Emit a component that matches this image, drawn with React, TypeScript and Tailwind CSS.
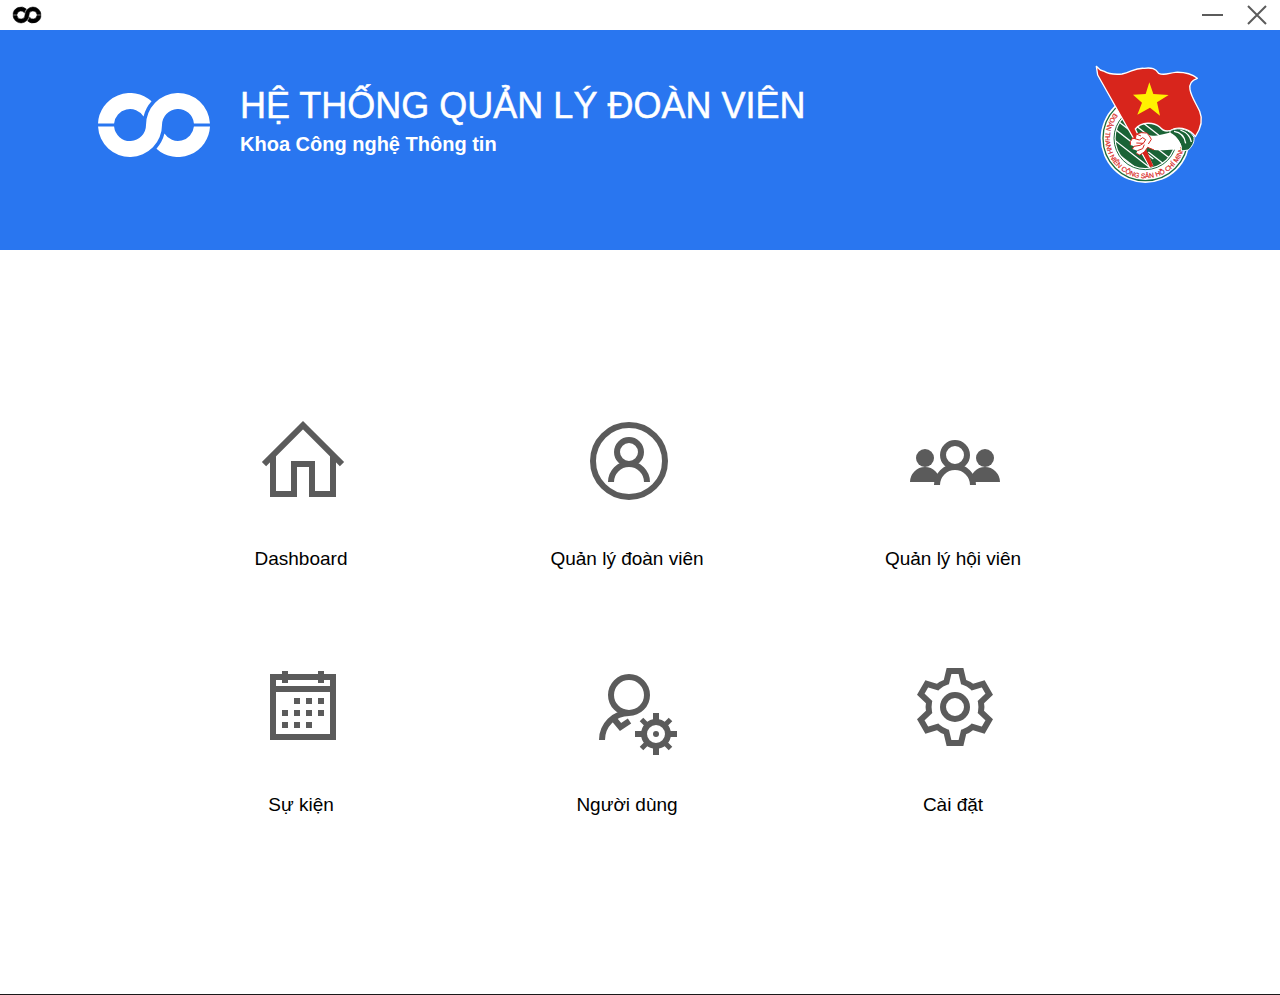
import type { ReactNode } from "react";

function BrandMark({ className }: { className: string }) {
  return (
    <svg viewBox="0 0 112 64" className={className} fill="currentColor" aria-hidden="true">
      <path d="M0 30.4A32 32 0 0 1 53.54 8.34A35.5 35.5 0 0 0 45.54 23.47A16 16 0 0 0 16.1 30.4Z" />
      <path d="M112 33.6A32 32 0 0 1 58.46 55.66A35.5 35.5 0 0 0 66.46 40.53A16 16 0 0 0 95.9 33.6Z" />
      <path d="M0.04 33.6A32 32 0 0 0 64 32A16 16 0 0 1 95.92 30.4H111.96A32 32 0 0 0 48 32A16 16 0 0 1 16.08 33.6Z" />
    </svg>
  );
}

function UnionEmblem() {
  return (
    <svg viewBox="0 0 420 435" className="h-[145px] w-[140px] shrink-0" role="img" aria-label="Huy hiệu Đoàn">
      <defs>
        <path id="motto" d="M103 189A120 120 0 1 0 316 265" />
        <clipPath id="field">
          <circle cx="196" cy="265" r="91" />
        </clipPath>
      </defs>
      <circle cx="196" cy="265" r="134" fill="#fff" />
      <circle cx="196" cy="265" r="127" fill="none" stroke="#1b6b3c" strokeWidth="4" />
      <circle cx="196" cy="265" r="94" fill="#fff" stroke="#1b6b3c" strokeWidth="3" />
      <circle cx="196" cy="265" r="89" fill="#1a6336" />
      <g clipPath="url(#field)" stroke="#fff" strokeWidth="4" fill="none">
        <path d="M94 198L215 292M94 229L220 327M94 263L210 353M98 300L186 368M120 190L230 276M205 306L260 349M214 282L280 333M178 210L250 266" />
      </g>
      <text
        fill="#d8251c"
        stroke="#d8251c"
        strokeWidth="0.6"
        fontFamily="Liberation Sans, Arial, sans-serif"
        fontSize="20"
      >
        <textPath href="#motto">ĐOÀN THANH NIÊN CỘNG SẢN HỒ CHÍ MINH</textPath>
      </text>
      <path
        d="M49 49L61 60L73 64Q90 75 126 72C154 67 164 53 192 55C216 52 226 56 236 70C253 78 267 69 286 67C310 66 337 73 352 85C337 90 326 98 330 119C334 141 349 162 359 184C369 208 365 232 346 260C332 239 304 230 281 237C263 247 248 242 239 231C222 216 184 214 166 237L218 347L209 351L53 75Z"
        fill="#d8251c"
        stroke="#fff"
        strokeWidth="4"
        strokeLinejoin="round"
      />
      <path
        d="M270 242C299 229 331 239 342 262C344 279 334 291 325 300L304 303C308 282 290 264 270 250Z"
        fill="#1a6336"
        stroke="#fff"
        strokeWidth="3"
      />
      <path d="M282 244Q312 248 317 280M301 240Q330 251 334 276" fill="none" stroke="#fff" strokeWidth="4" />
      <path d="M187 305L199 299L220 348L210 352Z" fill="#d8251c" />
      <path
        d="M151 275L158 264L166 266L169 252L184 248L200 249L207 256C226 260 254 251 270 248C285 253 299 270 303 286L298 300C273 298 243 303 222 300L203 292L193 306L179 315L169 310L172 302L157 297L162 289L151 285Z"
        fill="#fff"
      />
      <path
        d="M158 264L178 270L188 263L197 269L190 280L169 279M162 289L180 286L190 280M172 302L188 296L193 284M169 252L183 258M207 256L214 268L205 282"
        fill="none"
        stroke="#d8251c"
        strokeWidth="3"
      />
      <path
        d="M151 285V275L158 264L166 266L169 252L184 248L200 249L207 256M157 297L162 289M169 310L179 315L193 306L203 292L222 300"
        fill="none"
        stroke="#d8251c"
        strokeWidth="3"
        strokeLinejoin="round"
      />
      <path d="M208 97L220 132L266 135L231 157L240 197L210 173L172 194L186 158L159 134L197 132Z" fill="#fff200" />
    </svg>
  );
}

function TileIcon({ children }: { children: ReactNode }) {
  return (
    <svg
      viewBox="-50 -48 96 96"
      className="size-24 overflow-visible text-[#5b5b5b]"
      fill="none"
      stroke="currentColor"
      strokeWidth="6"
      aria-hidden="true"
    >
      {children}
    </svg>
  );
}

const tiles: { label: string; icon: ReactNode }[] = [
  {
    label: "Dashboard",
    icon: <path d="M-39 3.2L0 -35.8L39 3.2M-30 -6V33H-9V3H9V33H30V-6" />,
  },
  {
    label: "Quản lý đoàn viên",
    icon: (
      <>
        <circle r="36" />
        <circle cy="-9" r="12" />
        <path d="M-18 21A18 18 0 0 1 18 21" />
      </>
    ),
  },
  {
    label: "Quản lý hội viên",
    icon: (
      <>
        <g fill="currentColor" stroke="none">
          <circle cx="-30" cy="-3" r="9" />
          <circle cx="30" cy="-3" r="9" />
          <path d="M-45 21A15 15 0 0 1 -15 21ZM15 21A15 15 0 0 1 45 21Z" />
        </g>
        <path d="M-18 24A18 18 0 0 1 18 24" fill="#fff" />
        <circle cy="-6" r="12" fill="#fff" />
      </>
    ),
  },
  {
    label: "Sự kiện",
    icon: (
      <>
        <path d="M-30 -30H30V30H-30ZM-30 -18H30M-18 -36V-24M18 -36V-24" />
        <path d="M-9 -6H-3M3 -6H9M15 -6H21M-21 6H-15M-9 6H-3M3 6H9M15 6H21M-21 18H-15M-9 18H-3M3 18H9" />
      </>
    ),
  },
  {
    label: "Người dùng",
    icon: (
      <>
        <circle cy="-12" r="18" />
        <path d="M-27 33A27 27 0 0 1 0 6" />
        <path d="M-15.5 11.5L-8.5 20L0.5 14" />
        <circle cx="27" cy="27" r="12" />
        <circle cx="27" cy="27" r="3" fill="currentColor" stroke="none" />
        <path d="M27 6V14M27 40V48M6 27H14M40 27H48" />
        <path d="M12.5 12.5L18 18M36 36L41.5 41.5M41.5 12.5L36 18M12.5 41.5L18 36" strokeWidth="5" />
      </>
    ),
  },
  {
    label: "Cài đặt",
    icon: (
      <>
        <circle r="12" />
        <path d="M-8.6 -25L-6 -36H6L8.6 -25A26.4 26.4 0 0 1 17.35 -19.95L28.2 -23.2L34.2 -12.8L25.95 -5.05A26.4 26.4 0 0 1 25.95 5.05L34.2 12.8L28.2 23.2L17.35 19.95A26.4 26.4 0 0 1 8.6 25L6 36H-6L-8.6 25A26.4 26.4 0 0 1 -17.35 19.95L-28.2 23.2L-34.2 12.8L-25.95 5.05A26.4 26.4 0 0 1 -25.95 -5.05L-34.2 -12.8L-28.2 -23.2L-17.35 -19.95A26.4 26.4 0 0 1 -8.6 -25Z" />
      </>
    ),
  },
];

export default function App() {
  return (
    <div className="flex min-h-screen flex-col border-b border-[#1c191a] bg-white font-['Liberation_Sans',Arial,sans-serif] text-black">
      <div className="flex h-[30px] items-center justify-between px-[13px]">
        <BrandMark className="h-4 w-7 overflow-visible stroke-current stroke-2" />
        <div className="flex items-center gap-[23px] text-[#5b5b5b]">
          <button type="button" aria-label="Thu nhỏ">
            <svg viewBox="0 0 22 20" className="h-5 w-[22px]" stroke="currentColor" strokeWidth="2" aria-hidden="true">
              <path d="M0 10H21" />
            </svg>
          </button>
          <button type="button" aria-label="Đóng">
            <svg viewBox="0 0 20 20" className="size-5" stroke="currentColor" strokeWidth="2" aria-hidden="true">
              <path d="M1 1L19 19M19 1L1 19" />
            </svg>
          </button>
        </div>
      </div>

      <header className="flex h-[220px] items-start justify-between bg-[#2976f0] pl-[98px] pr-[60px] pt-5 text-white">
        <div className="flex items-start gap-[30px] pt-9">
          <BrandMark className="mt-[7px] h-16 w-28 shrink-0" />
          <div>
            <h1 className="text-[36px] leading-10 [-webkit-text-stroke:0.5px_white]">HỆ THỐNG QUẢN LÝ ĐOÀN VIÊN</h1>
            <p className="mt-1 text-[20px] font-bold leading-7">Khoa Công nghệ Thông tin</p>
          </div>
        </div>
        <UnionEmblem />
      </header>

      <main className="grid grid-cols-3 gap-y-[86px] pb-40 pl-[138px] pr-[164px] pt-[163px]">
        {tiles.map((tile) => (
          <button key={tile.label} type="button" className="flex flex-col items-center gap-9 justify-self-center">
            <TileIcon>{tile.icon}</TileIcon>
            <span className="text-[19px] leading-7">{tile.label}</span>
          </button>
        ))}
      </main>
    </div>
  );
}
